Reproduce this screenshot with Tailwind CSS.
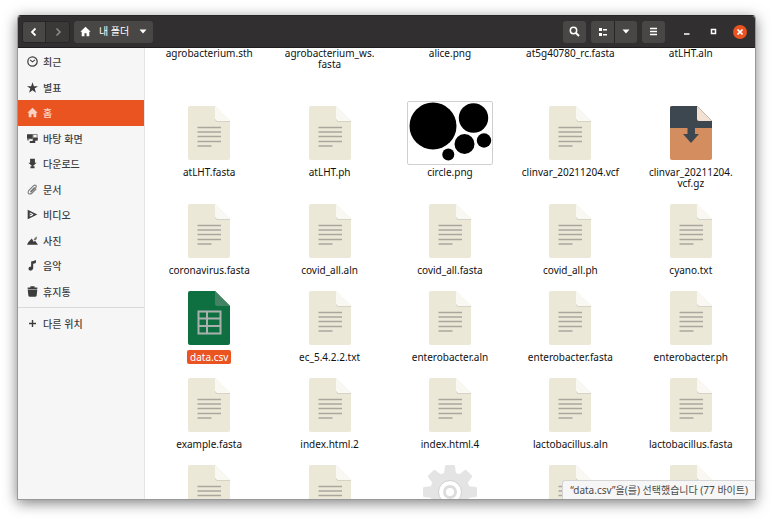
<!DOCTYPE html>
<html lang="ko">
<head>
    <meta charset="UTF-8">
    <meta name="viewport" content="width=device-width, initial-scale=1.0">
    <title>내 폴더</title>
    <script src="https://cdn.jsdelivr.net/npm/@tailwindcss/browser@4"></script>
</head>
<body class="h-screen overflow-hidden bg-white pt-[15px] pr-[17px] pb-[19px] pl-[17px] font-['Noto_Sans','Noto_Sans_CJK_KR',sans-serif] text-[10px] text-[#111]">
    <svg class="hidden">
        <symbol id="doc" viewBox="0 0 42 54">
            <path d="M2 0H27L42 15V52Q42 54 40 54H2Q0 54 0 52V2Q0 0 2 0Z" fill="#ebe8d8"/>
            <path d="M27 0L42 15H29Q27 15 27 13Z" fill="#f9f8f2"/>
            <path d="M27.5 13.5Q27.5 15.5 29 15.5H42" fill="none" stroke="#d5d3c5" stroke-width="1"/>
            <path d="M9.5 21.5H33M9.5 26H33M9.5 30.5H33M9.5 35.5H33M9.5 40H23.5" stroke="#aaa89d" stroke-width="1.3"/>
        </symbol>
        <symbol id="home" viewBox="0 0 16 16">
            <path d="M8 1L15.5 8.5H13.5V15H9.5V10.5H6.5V15H2.5V8.5H.5Z" fill="currentColor"/>
        </symbol>
        <symbol id="caret" viewBox="0 0 8 5">
            <path d="M.5 .5H7.5L4 4.5Z" fill="currentColor"/>
        </symbol>
    </svg>

    <div class="flex h-full flex-col overflow-hidden rounded-t-[4px] border border-[#999] border-t-[#262626] shadow-[0_3px_14px_rgba(0,0,0,0.5)]">
        <header class="flex h-8 shrink-0 items-center border-b border-[#1f1d1d] bg-[#322f30] px-1 text-white">
            <div class="flex h-[22px] overflow-hidden rounded-[3px] border border-[#282626]">
                <button aria-label="뒤로" class="grid w-[23px] place-items-center border-r border-[#282626] bg-[#494745]">
                    <svg class="size-[10px]" viewBox="0 0 10 10" fill="none" stroke="currentColor" stroke-width="1.8"><path d="M6.500 1.500L3 5L6.500 8.500"/></svg>
                </button>
                <button aria-label="앞으로" class="grid w-[23px] place-items-center bg-[#3b3938] text-[#8f8d8b]">
                    <svg class="size-[10px]" viewBox="0 0 10 10" fill="none" stroke="currentColor" stroke-width="1.5"><path d="M3.500 1.500L7 5L3.500 8.500"/></svg>
                </button>
            </div>
            <button class="ml-1 flex h-[22px] items-center rounded-[3px] bg-[#494745] pr-1.5 pl-1.5">
                <svg class="size-[11px]"><use href="#home"/></svg>
                <span class="mr-2.5 ml-2">내 폴더</span>
                <svg class="h-[5px] w-2"><use href="#caret"/></svg>
            </button>

            <button aria-label="검색" class="ml-auto grid h-[22px] w-[23px] place-items-center rounded-[3px] bg-[#494745]">
                <svg class="size-[11px]" viewBox="0 0 11 11" fill="none" stroke="currentColor"><circle cx="4.5" cy="4.5" r="3.2" stroke-width="1.5"/><path d="M7 7L10 10" stroke-width="2"/></svg>
            </button>
            <div class="ml-[5px] flex h-[22px] overflow-hidden rounded-[3px] bg-[#494745]">
                <button aria-label="보기" class="grid w-6 place-items-center border-r border-[#282626]">
                    <svg class="size-[10px]" viewBox="0 0 10 10" fill="currentColor"><path d="M1 1h3v3H1zM1 6h3v3H1zM5 2h4v1.500h-4zM5 7h4v1.500h-4z"/></svg>
                </button>
                <button aria-label="보기 옵션" class="grid w-[22px] place-items-center">
                    <svg class="h-[5px] w-2"><use href="#caret"/></svg>
                </button>
            </div>
            <button aria-label="메뉴" class="ml-[5px] grid h-[22px] w-[23px] place-items-center rounded-[3px] bg-[#494745]">
                <svg class="size-[9px]" viewBox="0 0 9 9" stroke="currentColor" stroke-width="1.4"><path d="M1 1.500H8M1 4.500H8M1 7.500H8"/></svg>
            </button>
            <button aria-label="최소화" class="ml-3.5 grid size-[14px] place-items-center">
                <svg class="size-[7px]" viewBox="0 0 7 7"><path d="M1 6H6.5" stroke="currentColor" stroke-width="1.4"/></svg>
            </button>
            <button aria-label="최대화" class="ml-[13px] grid size-[14px] place-items-center">
                <svg class="size-[7px]" viewBox="0 0 7 7"><path d="M1.5 1.5H5.5V5.5H1.5Z" fill="none" stroke="currentColor" stroke-width="1.5"/></svg>
            </button>
            <button aria-label="닫기" class="mr-1 ml-[13px] grid size-[14px] place-items-center rounded-full bg-[#e95420]">
                <svg class="size-[6px]" viewBox="0 0 6 6"><path d="M.5 .5L5.5 5.5M5.5 .5L.5 5.5" stroke="currentColor" stroke-width="1.6"/></svg>
            </button>
        </header>

        <div class="flex min-h-0 flex-1">
            <nav class="w-[127px] shrink-0 border-r border-[#e4e4e4] bg-[#f6f6f6] pt-px font-['Noto_Sans_CJK_KR',sans-serif] font-medium text-[#3d3d3d]">
                <div class="grid h-[255px] auto-rows-fr">
                    <a href="#" class="flex items-center gap-[5px] pl-[9px]">
                        <svg class="size-[11px]" viewBox="0 0 16 16" fill="none" stroke="currentColor" stroke-width="1.800"><circle cx="8" cy="8" r="6.8"/><path d="M4.500 5.500L8 8.500L11.500 5.500" stroke-width="1.500"/></svg>
                        최근
                    </a>
                    <a href="#" class="flex items-center gap-[5px] pl-[9px]">
                        <svg class="size-[11px]" viewBox="0 0 16 16" fill="currentColor"><path d="M8 .5L10 6H16L11.2 9.5L13 15.5L8 12L3 15.5L4.800 9.500L0 6H6Z"/></svg>
                        별표
                    </a>
                    <a href="#" class="flex items-center gap-[5px] bg-[#e95420] pl-[9px] text-[#fbd3c5]">
                        <svg class="size-[11px]"><use href="#home"/></svg>
                        홈
                    </a>
                    <a href="#" class="flex items-center gap-[5px] pl-[9px]">
                        <svg class="size-[11px]" viewBox="0 0 16 16" fill="currentColor"><rect x="0" y="1.500" width="15.500" height="9.500" rx="1" opacity=".6"/><path d="M0 2H8V8H0ZM9 7H15.500V11H9ZM4 11H12V14.500H4Z"/><path d="M9.500 3H14V6H9.500ZM3 9H8V11.500H3Z" fill="#f6f6f6"/></svg>
                        바탕 화면
                    </a>
                    <a href="#" class="flex items-center gap-[5px] pl-[9px]">
                        <svg class="size-[11px]" viewBox="0 0 16 16" fill="currentColor"><path d="M4.500 1H11.500V7H14L8 12.500L2 7H4.500ZM5 12H11V15H5Z"/></svg>
                        다운로드
                    </a>
                    <a href="#" class="flex items-center gap-[5px] pl-[9px]">
                        <svg class="size-[11px]" viewBox="0 0 16 16" fill="none" stroke="#777" stroke-width="1.5"><path d="M11 5L5.500 10.500Q5 12 6.500 11.500L13 5Q14.500 2 11.500 1.500L9.500 2.500L2.500 9.500Q.5 13 3 14.500Q5 15 7 13.500L13.500 7"/></svg>
                        문서
                    </a>
                    <a href="#" class="flex items-center gap-[5px] pl-[9px]">
                        <svg class="size-[11px]" viewBox="0 0 16 16" fill="currentColor"><path d="M1 1L4 2.500V13.500L1 15ZM4 2.500L15 8L4 13.500V11L7 10L9.500 8L7 6L4 5Z"/><circle cx="5.500" cy="8" r="1"/></svg>
                        비디오
                    </a>
                    <a href="#" class="flex items-center gap-[5px] pl-[9px]">
                        <svg class="size-[11px]" viewBox="0 0 16 16" fill="currentColor"><path d="M0 14L2 10L7 5L10 10L11.500 8L16 14Z"/><path d="M9.500 7L12 3.500L14.500 2L14 6L12 7.500Z" opacity=".7"/></svg>
                        사진
                    </a>
                    <a href="#" class="flex items-center gap-[5px] pl-[9px]">
                        <svg class="size-[11px]" viewBox="0 0 16 16" fill="currentColor"><path d="M6 2Q9 2 13 0V4Q11 5.500 9 5.500V12Q8.500 15.500 5 15.500Q2 15 2 12.500Q2.500 9.500 6 9.500Z"/></svg>
                        음악
                    </a>
                    <a href="#" class="flex items-center gap-[5px] pl-[9px]">
                        <svg class="size-[11px]" viewBox="0 0 16 16" fill="currentColor"><path d="M5 .5H11V2H15V4.500H1V2H5ZM1 5.200H15L14 14Q13.500 15.500 12 15.500H4Q2.500 15.500 2 14Z"/></svg>
                        휴지통
                    </a>
                </div>
                <a href="#" class="mt-[3px] flex h-8 items-center gap-[5px] border-t border-[#dadada] pl-[9px]">
                    <svg class="size-[11px]" viewBox="0 0 11 11" stroke="currentColor" stroke-width="1.400"><path d="M5.500 2V9M2 5.500H9"/></svg>
                    다른 위치
                </a>
            </nav>

            <main class="relative min-w-0 flex-1 overflow-hidden bg-white">
                <div id="files" class="grid grid-cols-5 gap-y-2.5 px-1 text-center leading-[11px]">
                    <div class="h-[43px]">agrobacterium.sth</div>
                    <div class="h-[43px]">agrobacterium_ws.<br>fasta</div>
                    <div class="h-[43px]">alice.png</div>
                    <div class="h-[43px]">at5g40780_rc.fasta</div>
                    <div class="h-[43px]">atLHT.aln</div>
                </div>
                <p class="absolute right-0 bottom-0 rounded-tl-[3px] border-t border-l border-[#d5d5d5] bg-[#f6f6f6] px-[7px] leading-[18px] text-[#4a4a4a]">“data.csv”을(를) 선택했습니다 (77 바이트)</p>
            </main>
        </div>
    </div>

    <template id="icon-doc">
        <svg class="h-[54px] w-[42px]"><use href="#doc"/></svg>
    </template>
    <template id="icon-image">
        <svg class="h-16 w-[86px]" viewBox="0 0 86 64">
            <rect x=".5" y=".5" width="85" height="63" rx="1.500" fill="#fff" stroke="#d0d0d0"/>
            <circle cx="26" cy="25" r="23.500"/><circle cx="66.500" cy="17" r="14.700"/><circle cx="57.500" cy="43" r="10"/><circle cx="77" cy="39.500" r="7.200"/><circle cx="41.300" cy="53.500" r="6"/>
        </svg>
    </template>
    <template id="icon-archive">
        <svg class="h-[54px] w-[42px]" viewBox="0 0 42 54">
            <path d="M2 0H27L42 15V52Q42 54 40 54H2Q0 54 0 52V2Q0 0 2 0Z" fill="#d38d5f"/>
            <path d="M2 0H27L42 15V22H25V28H29L21 37L13 28H17.500V22H0V2Q0 0 2 0Z" fill="#3d4750"/>
            <path d="M27 0L42 15H29Q27 15 27 13Z" fill="#f2e0d3"/>
        </svg>
    </template>
    <template id="icon-sheet">
        <svg class="h-[54px] w-[42px]" viewBox="0 0 42 54">
            <path d="M2 0H27L42 15V52Q42 54 40 54H2Q0 54 0 52V2Q0 0 2 0Z" fill="#0e7040"/>
            <path d="M27 0L42 15H29Q27 15 27 13Z" fill="#438363"/>
            <path d="M10.500 20.500H32.500V42.500H10.500ZM10.500 27.500H32.500M10.500 35H32.500M19 20.500V42.500" fill="none" stroke="#a9b0ad" stroke-width="2"/>
        </svg>
    </template>
    <template id="icon-gear">
        <svg class="size-[54px]" viewBox="0 0 54 54">
            <g fill="#e4e4e4">
                <circle cx="27" cy="27" r="20"/>
                <path id="tooth" d="M21 9L22 1Q22.200 0 23.200 0H30.800Q31.800 0 32 1L33 9V45L32 53Q31.800 54 30.800 54H23.200Q22.200 54 22 53L21 45Z"/>
                <use href="#tooth" transform="rotate(45 27 27)"/>
                <use href="#tooth" transform="rotate(90 27 27)"/>
                <use href="#tooth" transform="rotate(135 27 27)"/>
            </g>
            <circle cx="27" cy="27" r="11.500" fill="#fff" stroke="#cfcfcf"/>
            <circle cx="27" cy="27" r="5.500" fill="#fff" stroke="#dcdcdc" stroke-width="3"/>
        </svg>
    </template>

    <script>
        const files = [
            ['atLHT.fasta'], ['atLHT.ph'], ['circle.png', 'image'], ['clinvar_20211204.vcf'], ['clinvar_20211204.<br>vcf.gz', 'archive'],
            ['coronavirus.fasta'], ['covid_all.aln'], ['covid_all.fasta'], ['covid_all.ph'], ['cyano.txt'],
            ['data.csv', 'sheet'], ['ec_5.4.2.2.txt'], ['enterobacter.aln'], ['enterobacter.fasta'], ['enterobacter.ph'],
            ['example.fasta'], ['index.html.2'], ['index.html.4'], ['lactobacillus.aln'], ['lactobacillus.fasta'],
            [''], [''], ['', 'gear'], [''], ['']
        ];
        const selected = 'data.csv';
        const grid = document.getElementById('files');

        files.forEach(([name, type = 'doc']) => {
            const cell = document.createElement('div');
            const icon = document.getElementById('icon-' + type).innerHTML;
            const mark = name === selected ? 'rounded-[2px] bg-[#e95420] px-[3px] text-white' : '';
            cell.innerHTML = `<div class="mb-0.5 grid h-16 place-items-center">${icon}</div><span class="${mark}">${name}</span>`;
            grid.appendChild(cell);
        });
    </script>
</body>
</html>
